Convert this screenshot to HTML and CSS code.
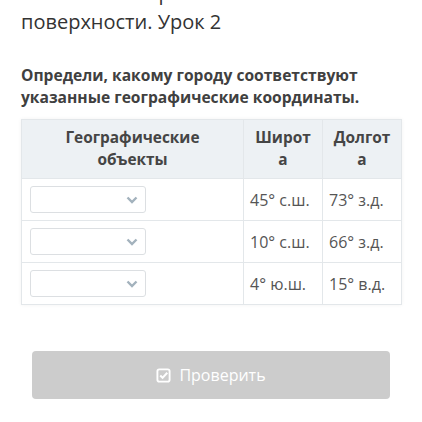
FILE: index.html
```html
<!DOCTYPE html>
<html lang="ru">
<head>
<meta charset="utf-8">
<link rel="stylesheet" href="styles.css">
</head>
<body>
<div class="page">
  <h1 class="title">Способы изображения земной поверхности. Урок 2</h1>
  <p class="question">Определи, какому городу соответствуют указанные географические координаты.</p>
  <table class="grid">
    <colgroup><col class="c1"><col class="c2"><col class="c3"></colgroup>
    <thead>
      <tr><th class="wide">Географические объекты</th><th class="brk">Широта</th><th class="brk">Долгота</th></tr>
    </thead>
    <tbody>
      <tr><td><div class="select"><svg class="chev" viewBox="0 0 12 8" width="12" height="8"><path d="M1.5 1.5l4.5 4.5 4.5-4.5" fill="none" stroke="#a3b2bd" stroke-width="2.4"/></svg></div></td><td>45° с.ш.</td><td>73° з.д.</td></tr>
      <tr><td><div class="select"><svg class="chev" viewBox="0 0 12 8" width="12" height="8"><path d="M1.5 1.5l4.5 4.5 4.5-4.5" fill="none" stroke="#a3b2bd" stroke-width="2.4"/></svg></div></td><td>10° с.ш.</td><td>66° з.д.</td></tr>
      <tr><td><div class="select"><svg class="chev" viewBox="0 0 12 8" width="12" height="8"><path d="M1.5 1.5l4.5 4.5 4.5-4.5" fill="none" stroke="#a3b2bd" stroke-width="2.4"/></svg></div></td><td>4° ю.ш.</td><td>15° в.д.</td></tr>
    </tbody>
  </table>
  <button class="check-btn"><svg viewBox="0 0 16 16" width="15" height="15"><rect x="1.5" y="1.5" width="13" height="13" rx="2" fill="none" stroke="#fff" stroke-width="2"/><path d="M4.5 8l2.5 2.5 5-5.5" fill="none" stroke="#fff" stroke-width="2.2"/></svg><span>Проверить</span></button>
</div>
</body>
</html>
```
FILE: styles.css
```css
html, body { margin: 0; padding: 0; background: #fff; }
body { font-family: "Open Sans", "Noto Sans", sans-serif; color: #333; overflow: hidden; }
.page { padding: 0 21px; }
.title {
  margin: -22px 0 0;
  font-size: 20px;
  line-height: 29px;
  font-weight: 400;
  color: #333;
  width: 330px;
}
.question {
  margin: 28px 0 11px;
  font-size: 15.6px;
  line-height: 22px;
  font-weight: 700;
  color: #404040;
}
.grid {
  width: 380px;
  border-collapse: collapse;
  table-layout: fixed;
  box-shadow: 0 0 4px rgba(0,0,0,0.05);
}
.c1 { width: 222px; }
.c2 { width: 79px; }
.c3 { width: 79px; }
.grid th, .grid td { border: 1px solid #e3e7ea; }
.grid th {
  background: #edf1f4;
  font-size: 15.4px;
  line-height: 22px;
  font-weight: 700;
  color: #454545;
  padding: 7px 8px;
  height: 44px;
  text-align: center;
}
.grid th.wide { padding: 7px 24px; }
.grid th.brk { overflow-wrap: anywhere; word-break: break-all; padding: 7px 8px; }
.grid td {
  height: 41px;
  padding: 0 6px;
  font-size: 16px;
  color: #555;
  vertical-align: middle;
}
.select {
  width: 116px;
  height: 27px;
  border: 1px solid #dcdfe2;
  border-radius: 3px;
  margin-left: 2px;
  display: flex;
  align-items: center;
  justify-content: flex-end;
  padding-right: 7px;
  box-sizing: border-box;
}
.check-btn {
  margin: 46px 0 0 11px;
  width: 358px;
  height: 48px;
  border: 0;
  border-radius: 4px;
  background: #cccccc;
  color: #fff;
  font-family: "Open Sans", "Noto Sans", sans-serif;
  font-size: 16px;
  display: flex;
  align-items: center;
  justify-content: center;
  gap: 8px;
}
```
